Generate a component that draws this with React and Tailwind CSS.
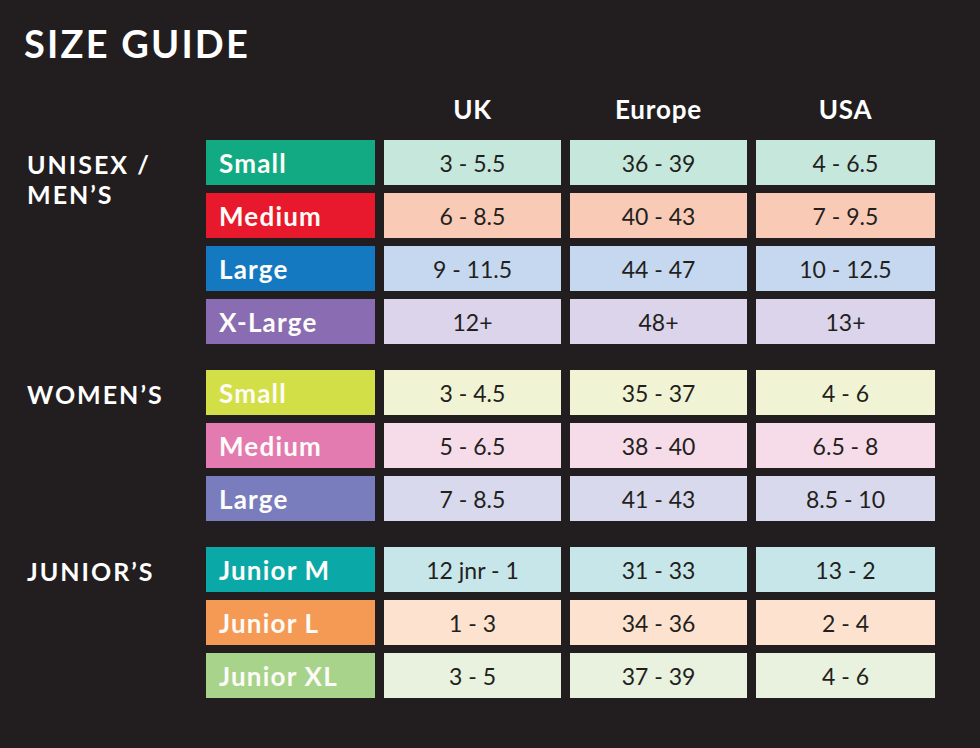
import React from "react";

const groups = [
  {
    name: ["UNISEX /", "MEN’S"],
    rows: [
      { label: "Small", c: "bg-[#11aa83]", l: "bg-[#c6e8dc]", v: ["3 - 5.5", "36 - 39", "4 - 6.5"] },
      { label: "Medium", c: "bg-[#e8192d]", l: "bg-[#f9cbb6]", v: ["6 - 8.5", "40 - 43", "7 - 9.5"] },
      { label: "Large", c: "bg-[#1479c0]", l: "bg-[#c5d8ef]", v: ["9 - 11.5", "44 - 47", "10 - 12.5"] },
      { label: "X-Large", c: "bg-[#8a6cb2]", l: "bg-[#dcd4ea]", v: ["12+", "48+", "13+"] },
    ],
  },
  {
    name: ["WOMEN’S"],
    rows: [
      { label: "Small", c: "bg-[#d3df47]", l: "bg-[#f1f4d4]", v: ["3 - 4.5", "35 - 37", "4 - 6"] },
      { label: "Medium", c: "bg-[#e37bb1]", l: "bg-[#f6dbe9]", v: ["5 - 6.5", "38 - 40", "6.5 - 8"] },
      { label: "Large", c: "bg-[#7a7dbd]", l: "bg-[#d8d9ec]", v: ["7 - 8.5", "41 - 43", "8.5 - 10"] },
    ],
  },
  {
    name: ["JUNIOR’S"],
    rows: [
      { label: "Junior M", c: "bg-[#0ba8a8]", l: "bg-[#c7e6e9]", v: ["12 jnr - 1", "31 - 33", "13 - 2"] },
      { label: "Junior L", c: "bg-[#f59a55]", l: "bg-[#fde3cf]", v: ["1 - 3", "34 - 36", "2 - 4"] },
      { label: "Junior XL", c: "bg-[#a8d38a]", l: "bg-[#e9f1df]", v: ["3 - 5", "37 - 39", "4 - 6"] },
    ],
  },
];

export default function App() {
  return (
    <div
      className="w-[980px] h-[748px] bg-[#221e1f] text-white overflow-hidden pl-[24px] pt-[25px]"
      style={{ fontFamily: "Lato, 'Open Sans', sans-serif" }}
    >
      <h1 className="text-[38px] leading-[36px] font-bold tracking-[2.2px]">SIZE GUIDE</h1>
      <div className="mt-[26px] flex">
        <div className="w-[182px]" />
        <div className="grid grid-cols-[169px_177px_177px_179px] gap-x-[9px] h-[45px]">
          <div />
          <div className="flex items-center justify-center text-[26px] font-bold tracking-[0.8px]">UK</div>
          <div className="flex items-center justify-center text-[26px] font-bold tracking-[0.8px]">Europe</div>
          <div className="flex items-center justify-center text-[26px] font-bold tracking-[0.8px]">USA</div>
        </div>
      </div>
      <div className="mt-[8px] flex flex-col gap-[26px]">
        {groups.map((g, gi) => (
          <div key={gi} className="flex">
            <div className="w-[182px] pl-[3px] pt-[9px] text-[25px] leading-[30px] font-bold tracking-[2px]">
              {g.name.map((n, i) => (
                <div key={i}>{n}</div>
              ))}
            </div>
            <div className="grid grid-cols-[169px_177px_177px_179px] gap-x-[9px] gap-y-[8px] auto-rows-[45px]">
              {g.rows.map((r, ri) => (
                <React.Fragment key={ri}>
                  <div className={`${r.c} flex items-center pl-[13px] pt-[1px] text-[26px] font-bold tracking-[1.2px] text-[#fdfcf8]`}>
                    {r.label}
                  </div>
                  {r.v.map((v, vi) => (
                    <div key={vi} className={`${r.l} flex items-center justify-center pt-[1px] text-[23px] text-[#231f20]`}>
                      {v}
                    </div>
                  ))}
                </React.Fragment>
              ))}
            </div>
          </div>
        ))}
      </div>
    </div>
  );
}
